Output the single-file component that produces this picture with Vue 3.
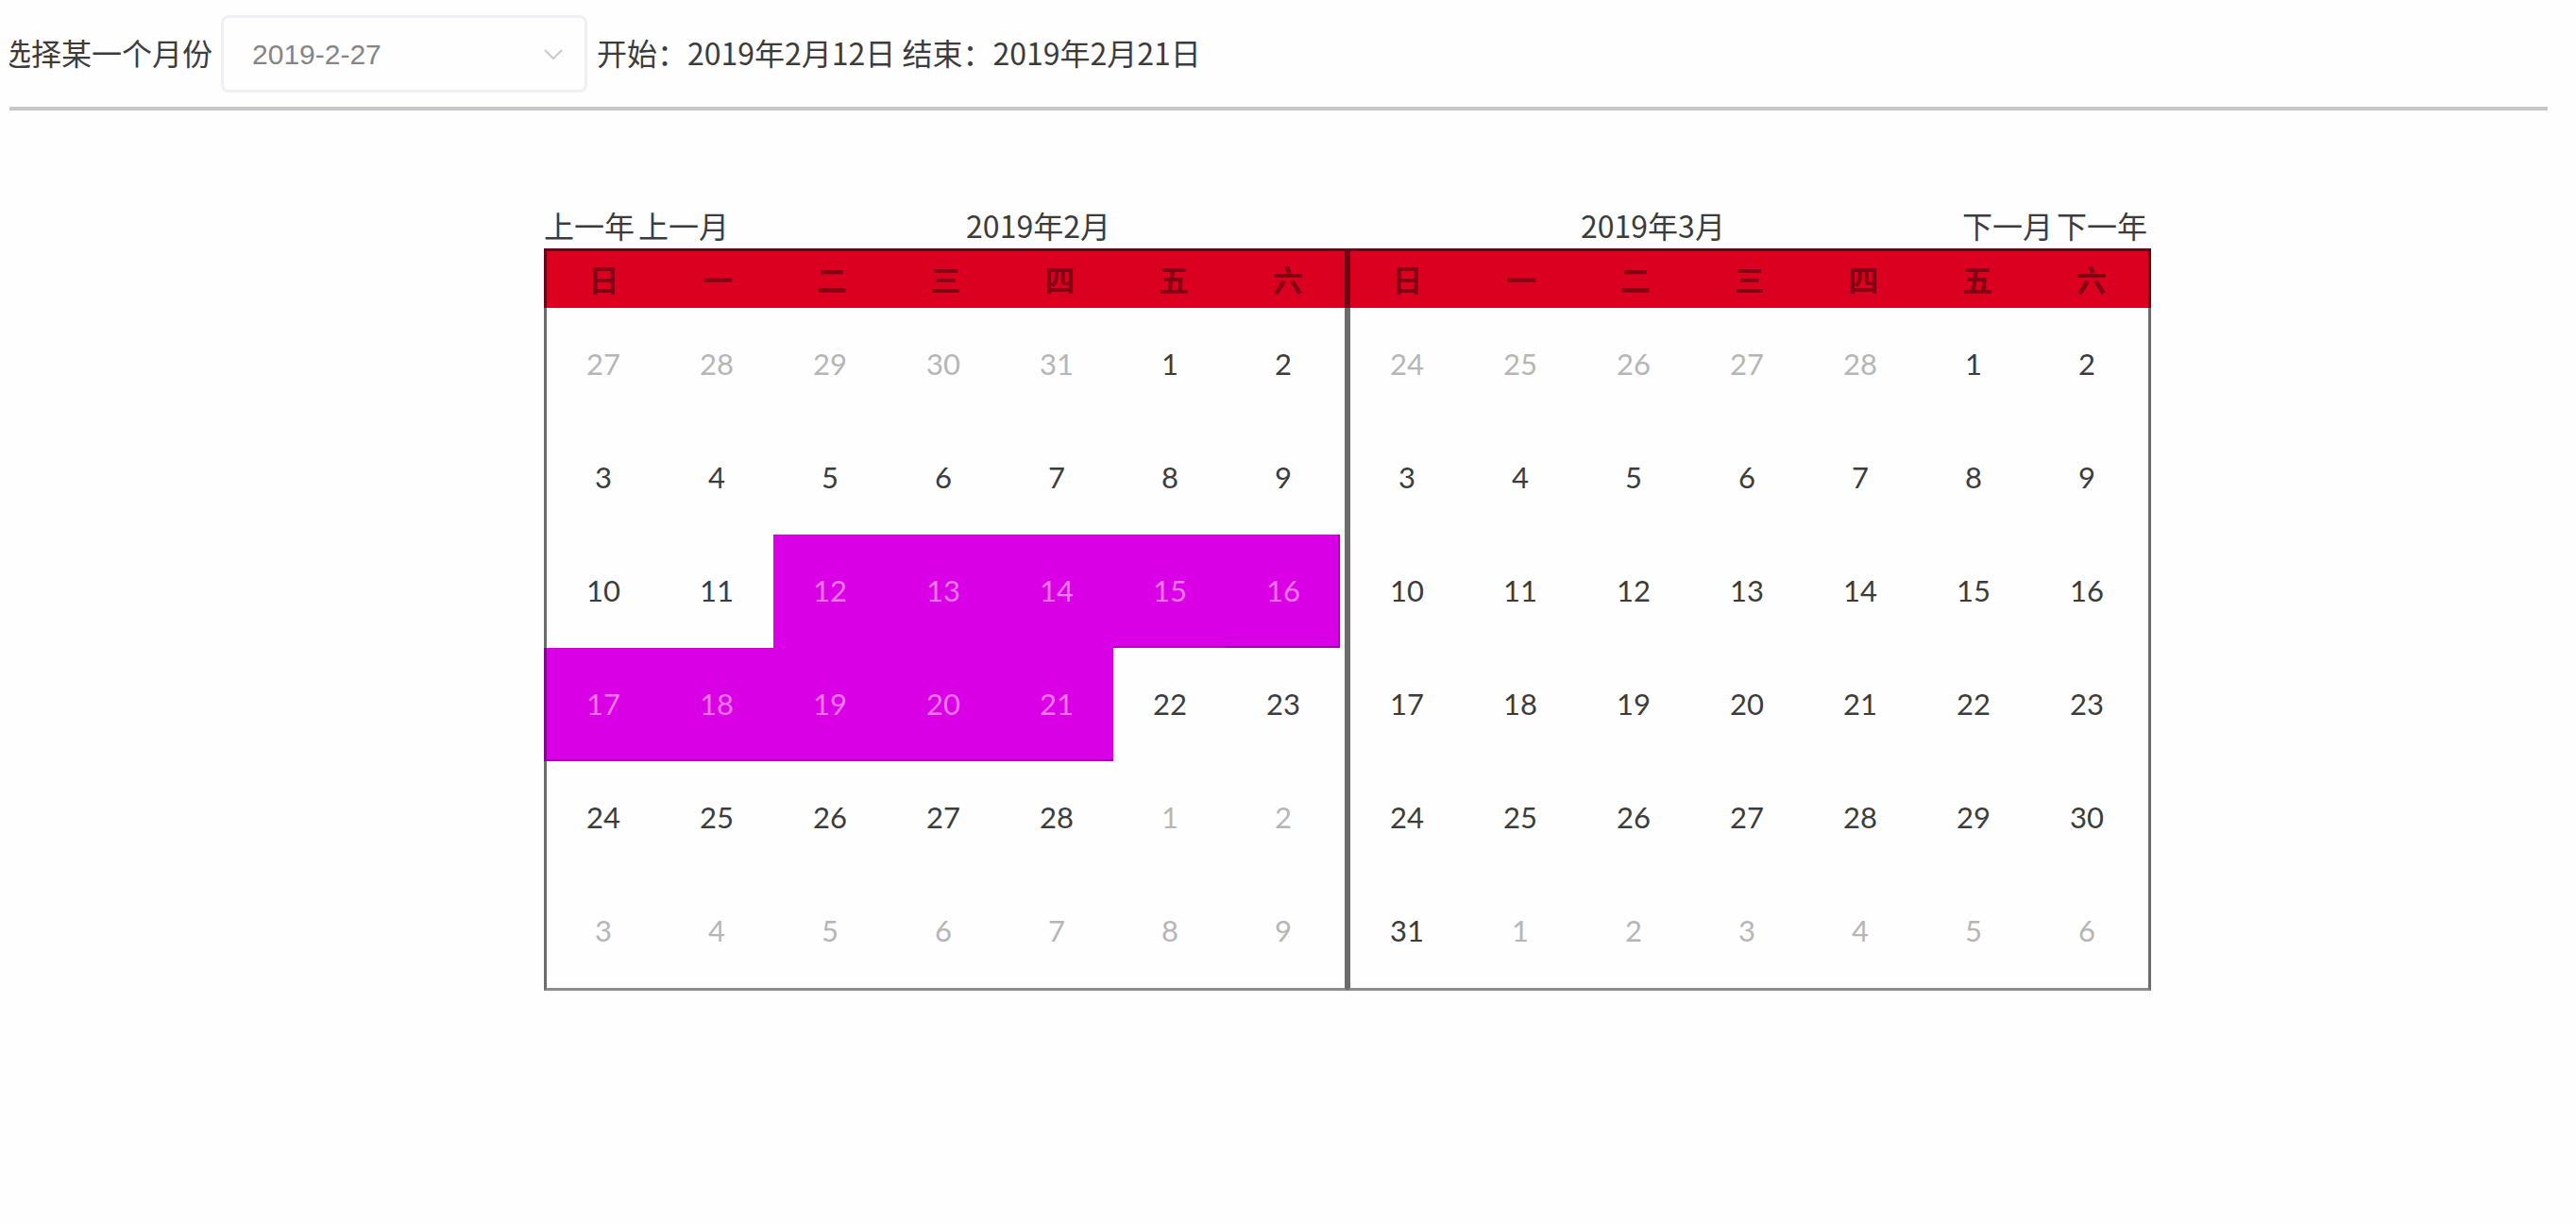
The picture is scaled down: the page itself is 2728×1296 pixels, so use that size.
<script setup>
import { ref } from 'vue'

const weekdays = ['日', '一', '二', '三', '四', '五', '六']
const picked = ref('2019-2-27')

// Six weeks of days: tail of the previous month, the month itself, head of the next
function buildWeeks(year, month, start, end) {
  const lead = new Date(year, month - 1, 1).getDay()
  const cells = Array.from({ length: 42 }, (_, i) => {
    const date = new Date(year, month - 1, i - lead + 1)
    const inMonth = date.getMonth() === month - 1
    const day = date.getDate()
    return { key: i, day, inMonth, inRange: inMonth && day >= start && day <= end }
  })
  cells.forEach((c, i) => {
    if (!c.inRange) return
    c.bottom = !cells[i + 7].inRange
    c.first = i % 7 === 0
    c.last = i % 7 === 6
  })
  return Array.from({ length: 6 }, (_, w) => cells.slice(w * 7, w * 7 + 7))
}

const months = [
  { title: '2019年2月', weeks: buildWeeks(2019, 2, 12, 21), prev: ['上一年', '上一月'], next: [] },
  { title: '2019年3月', weeks: buildWeeks(2019, 3, 0, 0), prev: [], next: ['下一月', '下一年'] }
]
</script>

<template>
  <main class="page">
    <header class="toolbar">
      <label class="label" for="month">选择某一个月份</label>
      <div class="picker">
        <select id="month" v-model="picked">
          <option>2019-2-27</option>
        </select>
        <svg class="chevron" viewBox="0 0 20 12" aria-hidden="true">
          <path d="M1 1 L10 10 L19 1" fill="none" stroke="#c8c8ce" stroke-width="2" />
        </svg>
      </div>
      <p class="range">开始：2019年2月12日 结束：2019年2月21日</p>
    </header>

    <div class="calendar">
      <section v-for="m in months" :key="m.title" class="month">
        <div class="nav">
          <button v-for="b in m.prev" :key="b" type="button">{{ b }}</button>
          <h2>{{ m.title }}</h2>
          <button v-for="b in m.next" :key="b" type="button">{{ b }}</button>
        </div>
        <table>
          <thead>
            <tr>
              <th v-for="d in weekdays" :key="d" scope="col">{{ d }}</th>
            </tr>
          </thead>
          <tbody>
            <tr v-for="(week, w) in m.weeks" :key="w">
              <td
                v-for="c in week"
                :key="c.key"
                :class="{ other: !c.inMonth, selected: c.inRange, bottom: c.bottom, first: c.first, last: c.last }"
              >{{ c.day }}</td>
            </tr>
          </tbody>
        </table>
      </section>
    </div>
  </main>
</template>

<style>
body {
  background: #fefefe;
}
</style>

<style scoped>
.page {
  font-family: "Noto Sans CJK SC", sans-serif;
  font-size: 32px;
  line-height: 40px;
  color: #3c3c3c;
}

.toolbar {
  display: flex;
  align-items: center;
  margin: 0 30px 0 10px;
  padding: 16px 0 15px;
  border-bottom: 4px solid #c6c6c8;
  overflow: hidden;
}

.label {
  margin-left: -9px;
  padding-bottom: 4px;
  white-space: nowrap;
}

.picker {
  position: relative;
  width: 388px;
  margin: 0 10px 0 9px;
}

select {
  display: block;
  box-sizing: border-box;
  width: 100%;
  height: 82px;
  padding: 0 60px 0 30px;
  border: 3px solid #f0eff4;
  border-radius: 8px;
  background: #fefefe;
  color: #858585;
  font: 30px "Liberation Sans", sans-serif;
  appearance: none;
}

.chevron {
  position: absolute;
  top: 36px;
  right: 26px;
  width: 20px;
  height: 12px;
}

.range {
  margin: 0;
  padding-bottom: 4px;
  white-space: nowrap;
}

.calendar {
  display: flex;
  padding: 101px 450px 0 576px;
}

.month {
  flex: 1;
}

.nav {
  display: flex;
  gap: 4px;
  height: 41px;
  padding: 0 4px 4px 0;
}

.nav h2 {
  flex: 1;
  margin: 0;
  font-size: 32px;
  font-weight: 400;
  text-align: center;
}

.nav button {
  height: 40px;
  padding: 0;
  border: 0;
  background: none;
  color: inherit;
  font: inherit;
}

table {
  display: block;
  border: 3px solid #6c6c6e;
  border-bottom-color: #8c8c8c;
}

thead,
tbody {
  display: block;
}

tr {
  display: flex;
}

thead {
  margin: -3px -3px 0;
  border: 3px solid #6c0016;
  border-bottom: 0;
  background: #dc0020;
}

th {
  flex: 1;
  padding: 0 0 2px;
  color: #820014;
  font-weight: 700;
  line-height: 58px;
}

td {
  flex: 0 0 14.2%;
  padding: 0 0 2px;
  font-family: Lato, sans-serif;
  font-size: 31px;
  line-height: 118px;
  text-align: center;
}

.other {
  color: #b6b6b6;
}

.selected {
  background: #da00e6;
  color: #f478f8;
}

.bottom {
  box-shadow: inset 0 -2px #b000bb;
}

.first {
  box-shadow: -3px 0 #86008e, inset 0 -2px #b000bb;
}

.last {
  box-shadow: inset -2px -2px #9a00a4;
}
</style>
